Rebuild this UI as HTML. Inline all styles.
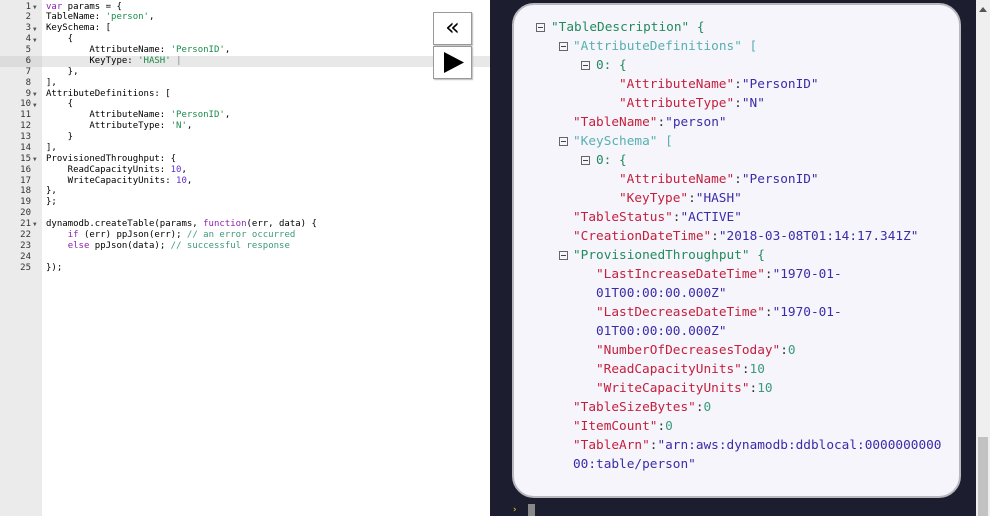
<!DOCTYPE html>
<html><head><meta charset="utf-8"><style>
*{margin:0;padding:0;box-sizing:border-box}
body{width:990px;height:516px;overflow:hidden;background:#fff;position:relative;font-family:"DejaVu Sans Mono","Liberation Mono",monospace}
#gut{position:absolute;left:0;top:0;width:42px;height:516px;background:#ebebeb}
#hl{position:absolute;left:42px;top:56px;width:448px;height:11px;background:#e8e8e8}
#gh{position:absolute;left:0;top:56px;width:42px;height:11px;background:#dcdcdc}
.code{position:absolute;top:1.5px;font-size:9px;line-height:10.875px;white-space:pre;color:#000}
#nums{left:0;width:31px;text-align:right;color:#333}
#src{left:46px}
.arr{position:absolute;left:33px;font-size:6px;color:#555}
.k{color:#9020b0}.s{color:#1a8a4a}.n{color:#6030d0}.c{color:#3a9a7a}
.btn{position:absolute;left:433px;width:39px;height:33px;background:#fff;border:1px solid #999;box-shadow:1px 1px 1px #bbb}
#right{position:absolute;left:490px;top:0;width:488px;height:516px;background:#1c1d2e}
#sb{position:absolute;left:976px;top:0;width:14px;height:516px;background:#efefef}
#thumb{position:absolute;left:978px;top:437px;width:10px;height:79px;background:#c2c2c2}
#card{position:absolute;left:512px;top:3px;width:449px;height:495px;background:#f6f5fc;border:2px solid #b8b8be;border-radius:22px}
.j{position:absolute;font-size:12.75px;line-height:19px;white-space:pre;margin-top:2px}
.t{position:absolute;width:9px;height:9px;border:1px solid #666;margin-top:2px}
.t:after{content:"";position:absolute;left:1px;top:3px;width:5px;height:1px;background:#444}
.g{color:#238a5c}.lt{color:#56b0b0}.r{color:#c4203c}.b{color:#3a2ca8}.nn{color:#3a9a7a}.p{color:#333}
</style></head><body>
<div id="gut"></div><div id="gh"></div><div id="hl"></div>
<div class="code" id="nums">1
2
3
4
5
6
7
8
9
10
11
12
13
14
15
16
17
18
19
20
21
22
23
24
25</div>
<div class="arr" style="top:4px">▼</div><div class="arr" style="top:26px">▼</div><div class="arr" style="top:37px">▼</div><div class="arr" style="top:91px">▼</div><div class="arr" style="top:102px">▼</div><div class="arr" style="top:156px">▼</div><div class="arr" style="top:221px">▼</div>
<div class="code" id="src"><span class="k">var</span> params = {
TableName: <span class="s">'person'</span>,
KeySchema: [
    {
        AttributeName: <span class="s">'PersonID'</span>,
        KeyType: <span class="s">'HASH'</span> <span style="color:#888">|</span>
    },
],
AttributeDefinitions: [
    {
        AttributeName: <span class="s">'PersonID'</span>,
        AttributeType: <span class="s">'N'</span>,
    }
],
ProvisionedThroughput: {
    ReadCapacityUnits: <span class="n">10</span>,
    WriteCapacityUnits: <span class="n">10</span>,
},
};

dynamodb.createTable(params, <span class="k">function</span>(err, data) {
    <span class="k">if</span> (err) ppJson(err); <span class="c">// an error occurred</span>
    <span class="k">else</span> ppJson(data); <span class="c">// successful response</span>

});</div>
<div class="btn" style="top:12px;font-size:24px;line-height:28px;text-align:center;font-family:'DejaVu Sans',sans-serif">«</div>
<div class="btn" style="top:46px"><svg width="37" height="31"><polygon points="10,5 30,15.5 10,26" fill="#000"/></svg></div>
<div id="right"></div>
<div id="card"></div>
<div id="sb"></div><div id="thumb"></div>
<div style="position:absolute;left:979px;top:7px;width:0;height:0;border-left:4px solid transparent;border-right:4px solid transparent;border-bottom:5px solid #555"></div>
<div style="position:absolute;left:512px;top:505px;color:#e0c020;font-size:9px;font-weight:bold">›</div>
<div style="position:absolute;left:528px;top:504px;width:7px;height:12px;background:#888"></div>

<div class="t" style="left:536px;top:21px"></div><div class="j g" style="left:551px;top:16px">"TableDescription" {</div>
<div class="t" style="left:559px;top:40px"></div><div class="j lt" style="left:573px;top:35px">"AttributeDefinitions" [</div>
<div class="t" style="left:581px;top:59px"></div><div class="j g" style="left:596px;top:54px">0: {</div>
<div class="j" style="left:619px;top:73px"><span class="r">"AttributeName"</span><span class="p">:</span><span class="b">"PersonID"</span></div>
<div class="j" style="left:619px;top:92px"><span class="r">"AttributeType"</span><span class="p">:</span><span class="b">"N"</span></div>
<div class="j" style="left:573px;top:111px"><span class="r">"TableName"</span><span class="p">:</span><span class="b">"person"</span></div>
<div class="t" style="left:559px;top:135px"></div><div class="j lt" style="left:573px;top:130px">"KeySchema" [</div>
<div class="t" style="left:581px;top:154px"></div><div class="j g" style="left:596px;top:149px">0: {</div>
<div class="j" style="left:619px;top:168px"><span class="r">"AttributeName"</span><span class="p">:</span><span class="b">"PersonID"</span></div>
<div class="j" style="left:619px;top:187px"><span class="r">"KeyType"</span><span class="p">:</span><span class="b">"HASH"</span></div>
<div class="j" style="left:573px;top:206px"><span class="r">"TableStatus"</span><span class="p">:</span><span class="b">"ACTIVE"</span></div>
<div class="j" style="left:573px;top:225px"><span class="r">"CreationDateTime"</span><span class="p">:</span><span class="b">"2018-03-08T01:14:17.341Z"</span></div>
<div class="t" style="left:559px;top:249px"></div><div class="j g" style="left:573px;top:244px">"ProvisionedThroughput" {</div>
<div class="j" style="left:596px;top:263px"><span class="r">"LastIncreaseDateTime"</span><span class="p">:</span><span class="b">"1970-01-</span></div>
<div class="j b" style="left:596px;top:282px">01T00:00:00.000Z"</div>
<div class="j" style="left:596px;top:301px"><span class="r">"LastDecreaseDateTime"</span><span class="p">:</span><span class="b">"1970-01-</span></div>
<div class="j b" style="left:596px;top:320px">01T00:00:00.000Z"</div>
<div class="j" style="left:596px;top:339px"><span class="r">"NumberOfDecreasesToday"</span><span class="p">:</span><span class="nn">0</span></div>
<div class="j" style="left:596px;top:358px"><span class="r">"ReadCapacityUnits"</span><span class="p">:</span><span class="nn">10</span></div>
<div class="j" style="left:596px;top:377px"><span class="r">"WriteCapacityUnits"</span><span class="p">:</span><span class="nn">10</span></div>
<div class="j" style="left:573px;top:396px"><span class="r">"TableSizeBytes"</span><span class="p">:</span><span class="nn">0</span></div>
<div class="j" style="left:573px;top:415px"><span class="r">"ItemCount"</span><span class="p">:</span><span class="nn">0</span></div>
<div class="j" style="left:573px;top:434px"><span class="r">"TableArn"</span><span class="p">:</span><span class="b">"arn:aws:dynamodb:ddblocal:0000000000</span></div>
<div class="j b" style="left:573px;top:453px">00:table/person"</div>
</body></html>
